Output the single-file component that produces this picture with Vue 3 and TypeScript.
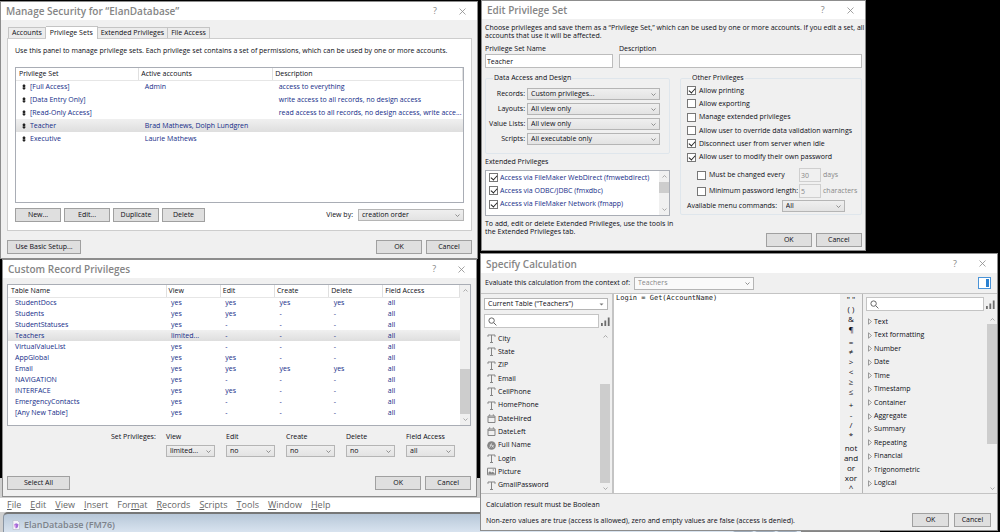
<script setup lang="ts">
import { ref, reactive } from 'vue'

const tabs = ['Accounts', 'Privilege Sets', 'Extended Privileges', 'File Access']
const activeTab = ref('Privilege Sets')

const privilegeSets = [
  { name: '[Full Access]', accounts: 'Admin', description: 'access to everything' },
  { name: '[Data Entry Only]', accounts: '', description: 'write access to all records, no design access' },
  { name: '[Read-Only Access]', accounts: '', description: 'read access to all records, no design access, write acce...' },
  { name: 'Teacher', accounts: 'Brad Mathews, Dolph Lundgren', description: '' },
  { name: 'Executive', accounts: 'Laurie Mathews', description: '' },
]
const selectedSet = ref('Teacher')

const recordRows = [
  ['StudentDocs', 'yes', 'yes', 'yes', 'yes', 'all'],
  ['Students', 'yes', 'yes', '-', '-', 'all'],
  ['StudentStatuses', 'yes', '-', '-', '-', 'all'],
  ['Teachers', 'limited...', '-', '-', '-', 'all'],
  ['VirtualValueList', 'yes', '-', '-', '-', 'all'],
  ['AppGlobal', 'yes', 'yes', '-', '-', 'all'],
  ['Email', 'yes', 'yes', 'yes', 'yes', 'all'],
  ['NAVIGATION', 'yes', '-', '-', '-', 'all'],
  ['INTERFACE', 'yes', 'yes', '-', '-', 'all'],
  ['EmergencyContacts', 'yes', '-', '-', '-', 'all'],
  ['[Any New Table]', 'yes', '-', '-', '-', 'all'],
]
const selectedTable = ref('Teachers')
const recordHeads = ['Table Name', 'View', 'Edit', 'Create', 'Delete', 'Field Access']
const setPrivileges = [
  { label: 'View', value: 'limited...' },
  { label: 'Edit', value: 'no' },
  { label: 'Create', value: 'no' },
  { label: 'Delete', value: 'no' },
  { label: 'Field Access', value: 'all' },
]

const accessRows = [
  { label: 'Records:', value: 'Custom privileges...' },
  { label: 'Layouts:', value: 'All view only' },
  { label: 'Value Lists:', value: 'All view only' },
  { label: 'Scripts:', value: 'All executable only' },
]
const extended = reactive([
  { label: 'Access via FileMaker WebDirect (fmwebdirect)', on: true },
  { label: 'Access via ODBC/JDBC (fmxdbc)', on: true },
  { label: 'Access via FileMaker Network (fmapp)', on: true },
])
const other = reactive([
  { label: 'Allow printing', on: true },
  { label: 'Allow exporting', on: false },
  { label: 'Manage extended privileges', on: false },
  { label: 'Allow user to override data validation warnings', on: false },
  { label: 'Disconnect user from server when idle', on: true },
  { label: 'Allow user to modify their own password', on: true },
])
const password = reactive([
  { label: 'Must be changed every', on: false, value: '30', unit: 'days' },
  { label: 'Minimum password length:', on: false, value: '5', unit: 'characters' },
])
const setName = ref('Teacher')
const setDescription = ref('')

const fields = [
  { name: 'City', kind: 'text' },
  { name: 'State', kind: 'text' },
  { name: 'ZIP', kind: 'text' },
  { name: 'Email', kind: 'text' },
  { name: 'CellPhone', kind: 'text' },
  { name: 'HomePhone', kind: 'text' },
  { name: 'DateHired', kind: 'date' },
  { name: 'DateLeft', kind: 'date' },
  { name: 'Full Name', kind: 'calc' },
  { name: 'Login', kind: 'text' },
  { name: 'Picture', kind: 'image' },
  { name: 'GmailPassword', kind: 'text' },
]
const formula = ref('Login = Get(AccountName)')
const operatorGroups = [
  ['" "', '( )', '&', '¶'],
  ['=', '≠', '>', '<', '≥', '≤'],
  ['+', '-', '/', '*'],
  ['not', 'and', 'or', 'xor', '^'],
]
const functionGroups = ['Text', 'Text formatting', 'Number', 'Date', 'Time', 'Timestamp', 'Container', 'Aggregate', 'Summary', 'Repeating', 'Financial', 'Trigonometric', 'Logical']

const menus = [
  ['', 'F', 'ile'], ['', 'E', 'dit'], ['', 'V', 'iew'], ['', 'I', 'nsert'], ['For', 'm', 'at'],
  ['', 'R', 'ecords'], ['', 'S', 'cripts'], ['', 'T', 'ools'], ['', 'W', 'indow'], ['', 'H', 'elp'],
]
</script>

<template>
  <main class="desktop">
    <div class="backdrop">
      <div class="back-app">
        <nav class="menubar" aria-label="Application menu">
          <button v-for="m in menus" :key="m.join('')" type="button">{{ m[0] }}<u>{{ m[1] }}</u>{{ m[2] }}</button>
        </nav>
        <div class="doc-title">
          <svg class="doc-icon" viewBox="0 0 8 10" aria-hidden="true">
            <path d="M1 .5h4.5L7.5 2.500V9.500H1z" fill="#f6f4fa" stroke="#b5b9c6" stroke-width=".6" />
            <path d="M2.200 4.200l2-1 2.300 1-.6 3-2 1.300z" fill="#a46bd8" />
            <path d="M2.200 4.200l1.700.8v3.500L2.600 7z" fill="#d99be8" />
          </svg>
          <span>ElanDatabase (FM76)</span>
          <i class="doc-controls"><b></b><b></b><b></b></i>
        </div>
      </div>
    </div>

    <div class="column left">
      <section class="window security">
        <header class="titlebar">
          <h2>Manage Security for “ElanDatabase”</h2>
          <button type="button" class="help">?</button>
          <button type="button" class="close" aria-label="Close"><svg viewBox="0 0 7 7"><path d="M.5 .5l6 6M6.500 .5l-6 6" /></svg></button>
        </header>
        <div class="content">
          <div class="tabs" role="tablist">
            <button v-for="t in tabs" :key="t" type="button" role="tab" :aria-selected="t === activeTab" :class="{ active: t === activeTab }" @click="activeTab = t">{{ t }}</button>
          </div>
          <div class="panel">
            <p class="intro">Use this panel to manage privilege sets. Each privilege set contains a set of permissions, which can be used by one or more accounts.</p>
            <div class="listbox sets">
              <table>
                <colgroup><col class="c-set"><col class="c-acc"><col></colgroup>
                <thead><tr><th>Privilege Set</th><th>Active accounts</th><th>Description</th></tr></thead>
                <tbody>
                  <tr v-for="s in privilegeSets" :key="s.name" :class="{ selected: s.name === selectedSet }" @click="selectedSet = s.name">
                    <td class="handle-cell"><svg class="handle" viewBox="0 0 4 6" aria-hidden="true"><path d="M2 0L4 2.300H0zM2 6L4 3.700H0zM1 2h2v2H1z" /></svg>{{ s.name }}</td>
                    <td>{{ s.accounts }}</td>
                    <td>{{ s.description }}</td>
                  </tr>
                </tbody>
              </table>
            </div>
            <div class="actions">
              <button type="button" class="btn">New...</button>
              <button type="button" class="btn">Edit...</button>
              <button type="button" class="btn">Duplicate</button>
              <button type="button" class="btn narrow">Delete</button>
              <label for="view-by">View by:</label>
              <span class="select order"><select id="view-by"><option>creation order</option></select><svg viewBox="0 0 5 3"><path d="M.5 .5l2 2 2-2" /></svg></span>
            </div>
          </div>
          <footer class="buttons">
            <button type="button" class="btn setup">Use Basic Setup...</button>
            <span class="spacer"></span>
            <button type="button" class="btn">OK</button>
            <button type="button" class="btn">Cancel</button>
          </footer>
        </div>
      </section>

      <section class="window records">
        <header class="titlebar">
          <h2>Custom Record Privileges</h2>
          <button type="button" class="help">?</button>
          <button type="button" class="close" aria-label="Close"><svg viewBox="0 0 7 7"><path d="M.5 .5l6 6M6.500 .5l-6 6" /></svg></button>
        </header>
        <div class="content">
          <div class="listbox rec-list">
            <table>
              <colgroup><col class="c-table"><col class="c-priv"><col class="c-priv"><col class="c-priv"><col class="c-priv"><col></colgroup>
              <thead><tr><th v-for="h in recordHeads" :key="h">{{ h }}</th></tr></thead>
              <tbody>
                <tr v-for="r in recordRows" :key="r[0]" :class="{ selected: r[0] === selectedTable }" @click="selectedTable = r[0]">
                  <td v-for="(c, i) in r" :key="i">{{ c }}</td>
                </tr>
              </tbody>
            </table>
            <div class="scroll low" aria-hidden="true">
              <svg viewBox="0 0 5 3"><path d="M.5 2.500l2-2 2 2" /></svg><i></i><svg viewBox="0 0 5 3"><path d="M.5 .5l2 2 2-2" /></svg>
            </div>
          </div>
          <div class="set-row">
            <span class="set-label">Set Privileges:</span>
            <label v-for="p in setPrivileges" :key="p.label"><span>{{ p.label }}</span>
              <span class="select"><select><option>{{ p.value }}</option></select><svg viewBox="0 0 5 3"><path d="M.5 .5l2 2 2-2" /></svg></span>
            </label>
          </div>
          <footer class="buttons">
            <button type="button" class="btn select-all">Select All</button>
            <span class="spacer"></span>
            <button type="button" class="btn">OK</button>
            <button type="button" class="btn">Cancel</button>
          </footer>
        </div>
      </section>
    </div>

    <div class="column right">
      <section class="window edit">
        <header class="titlebar">
          <h2>Edit Privilege Set</h2>
          <button type="button" class="help">?</button>
          <button type="button" class="close" aria-label="Close"><svg viewBox="0 0 7 7"><path d="M.5 .5l6 6M6.500 .5l-6 6" /></svg></button>
        </header>
        <div class="content">
          <p class="choose">Choose privileges and save them as a “Privilege Set,” which can be used by one or more accounts. If you edit a set, all<br>accounts that use it will be affected.</p>
          <div class="names">
            <label>Privilege Set Name<input v-model="setName" type="text"></label>
            <label>Description<input v-model="setDescription" type="text"></label>
          </div>
          <div class="halves">
            <div class="half-left">
              <fieldset class="access">
                <legend>Data Access and Design</legend>
                <label v-for="a in accessRows" :key="a.label"><span>{{ a.label }}</span>
                  <span class="select"><select><option>{{ a.value }}</option></select><svg viewBox="0 0 5 3"><path d="M.5 .5l2 2 2-2" /></svg></span>
                </label>
              </fieldset>
              <h3>Extended Privileges</h3>
              <div class="listbox ext">
                <div class="ext-items">
                  <label v-for="e in extended" :key="e.label" class="check"><input v-model="e.on" type="checkbox">{{ e.label }}</label>
                </div>
                <div class="scroll high" aria-hidden="true">
                  <svg viewBox="0 0 5 3"><path d="M.5 2.500l2-2 2 2" /></svg><i></i><svg viewBox="0 0 5 3"><path d="M.5 .5l2 2 2-2" /></svg>
                </div>
              </div>
              <p class="note">To add, edit or delete Extended Privileges, use the tools in<br>the Extended Privileges tab.</p>
            </div>
            <div class="half-right">
              <fieldset class="other">
                <legend>Other Privileges</legend>
                <div class="checks">
                  <label v-for="o in other" :key="o.label" class="check"><input v-model="o.on" type="checkbox">{{ o.label }}</label>
                </div>
                <div v-for="p in password" :key="p.label" class="pw">
                  <label class="check"><input v-model="p.on" type="checkbox">{{ p.label }}</label>
                  <input type="text" :value="p.value" :aria-label="p.unit" disabled>
                  <span>{{ p.unit }}</span>
                </div>
                <div class="menu-row">
                  <label for="menu-commands">Available menu commands:</label>
                  <span class="select"><select id="menu-commands"><option>All</option></select><svg viewBox="0 0 5 3"><path d="M.5 .5l2 2 2-2" /></svg></span>
                </div>
              </fieldset>
              <footer class="buttons">
                <span class="spacer"></span>
                <button type="button" class="btn">OK</button>
                <button type="button" class="btn">Cancel</button>
              </footer>
            </div>
          </div>
        </div>
      </section>

      <section class="window calc">
        <header class="titlebar">
          <h2>Specify Calculation</h2>
          <button type="button" class="help">?</button>
          <button type="button" class="close" aria-label="Close"><svg viewBox="0 0 7 7"><path d="M.5 .5l6 6M6.500 .5l-6 6" /></svg></button>
        </header>
        <div class="context">
          <label for="context">Evaluate this calculation from the context of:</label>
          <span class="select"><select id="context" disabled><option>Teachers</option></select><svg viewBox="0 0 5 3"><path d="M.5 .5l2 2 2-2" /></svg></span>
          <span class="spacer"></span>
          <button type="button" class="pane-toggle" aria-label="Toggle function pane"><i></i></button>
        </div>
        <div class="workspace">
          <div class="fields">
            <span class="select white"><select aria-label="Table"><option>Current Table (“Teachers”)</option></select><svg viewBox="0 0 5 3"><path d="M.5 .5h4l-2 2z" class="solid" /></svg></span>
            <div class="search">
              <span class="search-box"><svg viewBox="0 0 9 9"><circle cx="3.600" cy="3.600" r="2.700" /><path d="M5.600 5.600l2.800 2.800" /></svg><input type="text" aria-label="Search fields"></span>
              <svg class="bars" viewBox="0 0 9 9"><path d="M0 6h1.800v3H0zM3.400 3.600h1.800V9H3.400zM6.800 .5h1.800V9H6.800z" /></svg>
            </div>
            <div class="list-area">
              <ul>
                <li v-for="f in fields" :key="f.name">
                  <svg v-if="f.kind === 'text'" viewBox="0 0 9 9"><path d="M1 2.800V1h7v1.800M4.500 1v7.500M3 8.500h3" class="line" /></svg>
                  <svg v-else-if="f.kind === 'date'" viewBox="0 0 9 9"><path d="M1 2h7v6.500H1zM1 3.300h7M2.700 .3v1.600M6.300 .3v1.600" class="line" /></svg>
                  <svg v-else-if="f.kind === 'calc'" viewBox="0 0 9 9"><circle cx="4.500" cy="4.500" r="4.300" fill="#858585" /><path d="M2.300 6.800c1.300 0 1.200-4.300 2.800-4.500M2.700 4.200h2.100M4.700 6.500l2-2.600M4.900 4l1.600 2.500" stroke="#eee" stroke-width=".7" fill="none" /></svg>
                  <svg v-else viewBox="0 0 9 9"><path d="M.5 1.200h8v6.600h-8z" class="line" /><path d="M1.400 6.900V5.600l1.500-1.400 1.500 1.300 1.200-.8 2 1.300v.9z" fill="#858585" /><circle cx="6.300" cy="3" r=".7" fill="#858585" /></svg>
                  {{ f.name }}
                </li>
              </ul>
              <div class="scroll mid" aria-hidden="true">
                <svg viewBox="0 0 5 3"><path d="M.5 2.500l2-2 2 2" /></svg><i></i><svg viewBox="0 0 5 3"><path d="M.5 .5l2 2 2-2" /></svg>
              </div>
            </div>
          </div>
          <textarea v-model="formula" class="editor" aria-label="Calculation" spellcheck="false"></textarea>
          <div class="operators">
            <div v-for="(g, i) in operatorGroups" :key="i">
              <button v-for="o in g" :key="o" type="button">{{ o }}</button>
            </div>
          </div>
          <div class="functions">
            <div class="search">
              <span class="search-box"><svg viewBox="0 0 9 9"><circle cx="3.600" cy="3.600" r="2.700" /><path d="M5.600 5.600l2.800 2.800" /></svg><input type="text" aria-label="Search functions"></span>
              <svg class="bars" viewBox="0 0 9 9"><path d="M0 6h1.800v3H0zM3.400 3.600h1.800V9H3.400zM6.800 .5h1.800V9H6.800z" /></svg>
            </div>
            <div class="list-area">
              <ul>
                <li v-for="f in functionGroups" :key="f"><svg class="twist" viewBox="0 0 4 7"><path d="M.5 .8l3 2.700-3 2.700z" class="line" /></svg>{{ f }}</li>
              </ul>
              <div class="scroll top" aria-hidden="true">
                <svg viewBox="0 0 5 3"><path d="M.5 2.500l2-2 2 2" /></svg><i></i><svg viewBox="0 0 5 3"><path d="M.5 .5l2 2 2-2" /></svg>
              </div>
            </div>
          </div>
        </div>
        <footer class="calc-foot">
          <div>
            <p>Calculation result must be Boolean</p>
            <p>Non-zero values are true (access is allowed), zero and empty values are false (access is denied).</p>
          </div>
          <button type="button" class="btn">OK</button>
          <button type="button" class="btn">Cancel</button>
        </footer>
      </section>
    </div>
  </main>
</template>

<style>
body { margin: 0; background: #000; }
</style>

<style scoped>
* { box-sizing: border-box; }
.desktop {
  position: relative;
  display: flex;
  align-items: flex-start;
  min-height: 100vh;
  overflow: hidden;
  background: #000;
  color: #0c0c14;
  font: 7px/8px "Open Sans", "Noto Sans", sans-serif;
}
button, input, select, textarea { margin: 0; padding: 0; border: 0; border-radius: 0; background: none; color: inherit; font: inherit; outline: 0; }
p, h2, h3, ul { margin: 0; padding: 0; font-weight: 400; list-style: none; }
svg { display: block; flex: none; fill: none; }
.column { position: relative; min-width: 0; }
.left { width: 48%; }
.right { width: 52%; }

.backdrop { position: absolute; bottom: 0; left: 0; width: 88%; height: 54px; background: #858585; }
.back-app { width: 91%; height: 100%; padding-top: 20px; background: #d0d0d0; }
.menubar { display: flex; gap: 9px; height: 14px; padding-left: 7px; background: #fff; color: #666; font-size: 9px; line-height: 14px; }
.menubar u { text-underline-offset: 1px; }
.doc-title { display: flex; align-items: center; gap: 4px; height: 20px; margin-left: 3px; padding: 3px 4px 0 8px; border-top: 2px solid #777; border-left: 1px solid #8a96a4; border-radius: 5px 0 0 0; background: linear-gradient(#b7c7d8, #d8e3ef); color: #7c828a; font-size: 9px; font-weight: 600; line-height: 12px; }
.doc-icon { width: 8px; height: 10px; }
.doc-controls { display: flex; gap: 2px; align-self: flex-end; margin-left: auto; }
.doc-controls b { width: 20px; height: 3px; border: 1px solid #9eabba; border-top: 0; border-radius: 0 0 2px 2px; }

.window { border: 1px solid #8d8d8d; background: #f0f0f0; }
.titlebar { display: flex; align-items: center; height: 18px; padding: 0 11px 0 5px; background: #fff; color: #858585; }
.titlebar h2 { flex: 1; font-size: 10px; font-weight: 600; line-height: 14px; }
.help { width: 10px; margin-right: 19px; font-size: 9px; line-height: 12px; }
.close svg { width: 7px; height: 7px; stroke: #8b8b8b; stroke-width: .8; }
.btn { width: 46px; height: 14px; border: 1px solid #a0a0a0; background: #dfdfdf; text-align: center; line-height: 12px; white-space: nowrap; }
.buttons { display: flex; gap: 4px; }
.spacer { flex: 1; }

.select { position: relative; display: block; height: 12px; border: 1px solid #b5b5b5; background: linear-gradient(#efefef, #e3e3e3); }
.select select { display: block; width: 100%; height: 10px; padding: 0 10px 0 3px; appearance: none; line-height: 10px; }
.select svg { position: absolute; top: 4px; right: 3px; width: 5px; height: 3px; stroke: #777; stroke-width: .8; pointer-events: none; }
.select .solid { fill: #777; stroke: none; }
.select.white { background: #fff; }

.listbox { border: 1px solid #a9adb5; background: #fff; }
table { width: 100%; table-layout: fixed; border-collapse: collapse; }
th, td { padding: 0; overflow: hidden; font-weight: 400; text-align: left; white-space: nowrap; }
th { height: 12px; border-right: 1px solid #e0e0e0; border-bottom: 1px solid #e6e6e6; }
td { color: #142c88; }
.selected { background: linear-gradient(#f0f0f0, #dedede); }

.scroll { display: flex; flex: none; flex-direction: column; align-items: center; justify-content: space-between; width: 10px; background: #f0f0f0; }
.scroll svg { width: 5px; height: 3px; stroke: #999; stroke-width: .8; }
.scroll i { width: 10px; background: #cdcdcd; }

.check { display: flex; align-items: center; gap: 3px; white-space: nowrap; }
.check input { flex: none; width: 9px; height: 9px; border: 1px solid #777; background: #fff; appearance: none; }
.check input:checked::before { content: ""; display: block; width: 5px; height: 3px; margin: 1px 0 0 1px; border: solid #222; border-width: 0 0 1px 1px; transform: rotate(-48deg); }

.security { width: 478px; max-width: 100%; margin-top: 1px; }
.security .content { padding: 6px 5px 4px 6px; }
.tabs { display: flex; align-items: flex-end; padding-left: 1px; }
.tabs button { height: 11px; padding: 0 3px; border: 1px solid #c4c4c4; border-bottom: 0; border-left-width: 0; background: #ececec; line-height: 8px; }
.tabs button:first-child { border-left-width: 1px; }
.tabs .active { position: relative; height: 13px; margin-bottom: -1px; padding: 0 4px; background: #fff; line-height: 10px; }
.panel { padding: 8px 7px; border: 1px solid #cdcdcd; background: #fff; }
.intro { padding-bottom: 12px; white-space: nowrap; }
.sets { min-height: 136px; }
.sets th { padding-left: 2px; }
.sets th:first-child { padding-left: 3px; }
.sets td { height: 13px; padding-left: 6px; }
.sets .c-set { width: 27.5%; }
.sets .c-acc { width: 30%; }
.sets .handle-cell { padding-left: 6px; }
.handle { display: inline-block; width: 4px; height: 6px; margin-right: 4px; vertical-align: -1px; fill: #222; }
.actions { display: flex; align-items: center; gap: 3px; padding-top: 5px; }
.narrow { width: 43px; }
.actions label { margin-left: auto; }
.order { width: 106px; margin-left: 2px; }
.security .buttons { padding-top: 9px; }
.setup { width: 74px; }

.records { width: 476px; max-width: 99%; margin-left: 2px; }
.records .content { padding: 6px 5px 6px 4px; }
.rec-list { display: flex; min-height: 142px; }
.rec-list table { flex: 1; align-self: flex-start; }
.rec-list th { padding-left: 2px; }
.rec-list th:first-child { padding-left: 3px; }
.rec-list td { height: 11px; padding-left: 5px; }
.rec-list td:first-child { padding-left: 7px; }
.rec-list .c-table { width: 35%; }
.rec-list .c-priv { width: 12%; }
.scroll.low { padding: 4px 0; }
.low i { height: 45px; margin: auto 0 4px; }
.set-row { display: flex; gap: 11px; padding: 7px 0 19px 104px; }
.set-row label { width: 49px; white-space: nowrap; }
.set-row label > span:first-child { display: block; padding-bottom: 4px; }
.set-label { width: 44px; white-space: nowrap; }
.select-all { width: 63px; }

.edit { width: 74%; margin: 0 0 2px 1px; }
.edit .content { padding: 4px 3px 3px; }
.choose, .note { white-space: nowrap; }
.choose { padding-top: 1px; }
.names { display: grid; grid-template-columns: 128px 1fr; gap: 6px; padding-top: 5px; }
.names input { display: block; width: 100%; height: 14px; margin-top: 1px; padding: 0 1px; border: 1px solid #bcbcbc; background: #fff; }
.halves { display: flex; gap: 10px; padding-top: 6px; }
.half-left { width: 185px; }
.half-right { display: flex; flex: 1; flex-direction: column; justify-content: space-between; min-width: 0; }
fieldset { min-width: 0; margin: 0; padding: 0; border: 1px solid #dfe6ec; border-radius: 2px; }
legend { margin-left: 4px; padding: 0 1px; }
.access { padding: 6px 9px 5px 3px; }
.access label { display: flex; align-items: center; gap: 2px; margin-bottom: 3px; white-space: nowrap; }
.access label > span:first-child { width: 36px; text-align: right; }
.access .select { flex: 1; }
h3 { padding: 4px 0; font-size: 7px; line-height: 8px; }
.ext { display: flex; height: 46px; }
.ext-items { display: flex; flex: 1; flex-direction: column; padding: 0 3px 4px; color: #142c88; }
.ext .check { flex: 1; gap: 2px; }
.scroll.high { padding: 4px 0; }
.high i { height: 11px; margin: 4px 0 auto; }
.note { padding-top: 4px; }
.other { padding: 2px 6px 2px; }
.checks { display: flex; flex-direction: column; height: 80px; margin-bottom: 4px; }
.checks .check { flex: 1; }
.pw { display: grid; grid-template-columns: 102px 22px auto; align-items: center; height: 14px; margin: 2px 0 2px 10px; white-space: nowrap; }
.pw > input { height: 14px; padding: 0 1px; border: 1px solid #cfcfcf; color: #888; }
.pw > span { padding-left: 2px; color: #888; }
.menu-row { display: flex; align-items: center; justify-content: space-between; white-space: nowrap; }
.menu-row .select { width: 63px; margin-right: 10px; }
.edit .buttons { padding-top: 18px; }

.calc { width: 518px; max-width: 100%; }
.calc .titlebar { height: 19px; }
.context { display: flex; align-items: center; gap: 4px; height: 21px; padding: 0 6px 0 4px; border-bottom: 1px solid #c4c4c4; white-space: nowrap; }
.context .select { width: 120px; height: 13px; background: #fafafa; color: #888; }
.context select { opacity: 1; }
.pane-toggle { display: flex; justify-content: flex-end; width: 13px; height: 12px; padding: 1px; border: 1px solid #4a94d8; background: #fff; }
.pane-toggle i { width: 3px; background: #2a80d0; }
.workspace { display: flex; height: 200px; border-bottom: 1px solid #c4c4c4; }
.fields { display: flex; flex-direction: column; width: 133px; padding: 4px 2px 0 3px; border-right: 2px solid #c4c4c4; }
.fields .select { width: 124px; }
.fields .search { padding-top: 4px; }
.search { display: flex; align-items: center; gap: 2px; }
.search-box { display: flex; flex: 1; align-items: center; min-width: 0; height: 14px; padding-left: 3px; border: 1px solid #c4c4c4; background: #fff; }
.search-box svg { width: 9px; height: 9px; stroke: #666; stroke-width: 1; }
.search-box input { flex: 1; min-width: 0; }
.bars { width: 9px; height: 9px; fill: #6d6d6d; }
.fields .search { width: 126px; }
.list-area { display: flex; flex: 1; justify-content: space-between; min-height: 0; }
.list-area ul { display: flex; flex-direction: column; }
.list-area li { display: flex; flex: 1; align-items: center; gap: 2px; white-space: nowrap; }
.list-area li svg { width: 9px; height: 9px; }
.fields ul { padding: 4px 0 1px 3px; }
.line { stroke: #858585; stroke-width: 1; }
.scroll.mid, .scroll.top { padding: 7px 0 3px; }
.mid i { height: 99px; margin: auto 0 4px; }
.editor { flex: 1; min-width: 0; padding: 0 2px; background: #fff; color: #222; font: 7px/9px "DejaVu Sans Mono", monospace; resize: none; }
.operators { display: flex; flex-direction: column; justify-content: space-between; width: 22px; padding: 0; font-size: 8px; line-height: 10px; }
.operators button { display: block; width: 100%; height: 10px; text-align: center; white-space: nowrap; }
.functions { display: flex; flex-direction: column; width: 135px; padding: 3px 0 0 3px; border-left: 1px solid #b5b5b5; }
.functions .search { padding-right: 2px; }
.functions ul { padding: 4px 0 3px 2px; }
.list-area li .twist { width: 4px; height: 7px; }
.twist .line { stroke-width: .8; }
.top i { height: 120px; margin: 3px 0 auto; }
.calc-foot { display: flex; align-items: flex-end; gap: 5px; padding: 7px 6px 3px 5px; }
.calc-foot div { flex: 1; }
.calc-foot p:last-child { padding: 8px 0 2px; }
.calc-foot .btn { width: 37px; }
</style>
